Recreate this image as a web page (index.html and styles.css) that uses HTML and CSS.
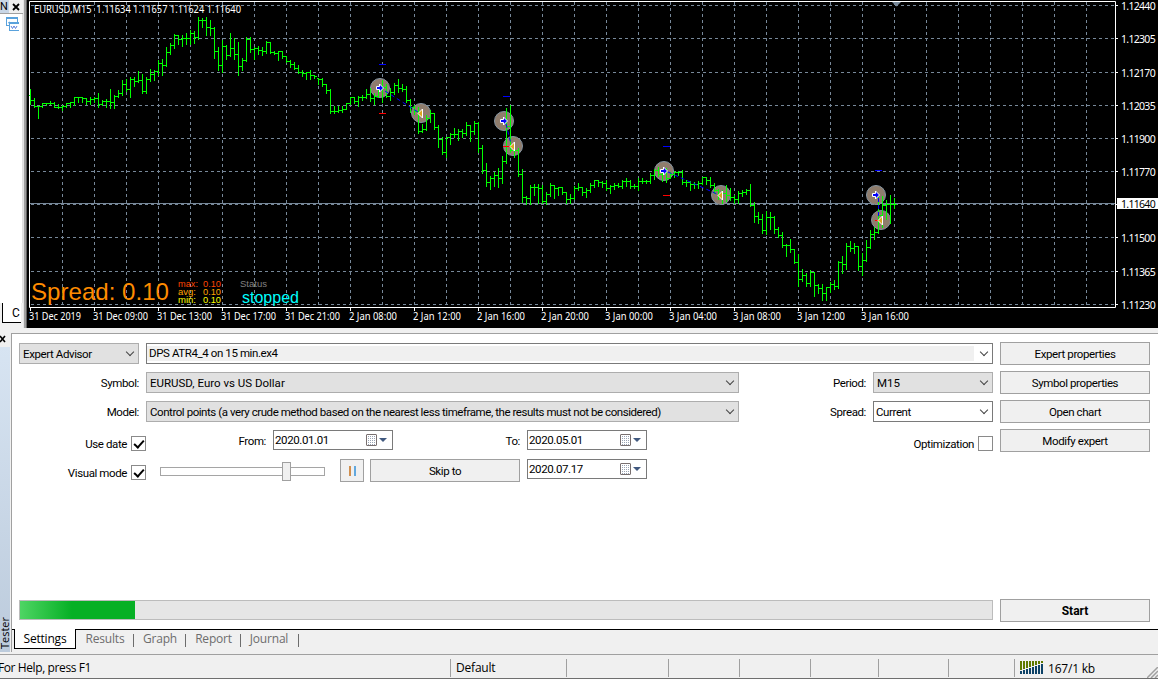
FILE: index.html
```html
<!DOCTYPE html>
<html lang="en">
<head>
  <meta charset="UTF-8" />
  <title>Strategy Tester</title>
  <link rel="stylesheet" href="styles.css">
</head>
<body>
  <div class="workspace">
    <div class="navigator">
      <div class="nav-head"><span class="nav-title">N</span>
        <svg width="8" height="8" viewBox="0 0 8 8"><path d="M1 1l6 6M7 1l-6 6" stroke="#000" stroke-width="1.8"/></svg>
      </div>
      <div class="nav-body">
        <svg class="nav-icon" width="13" height="15" viewBox="0 0 13 15">
          <rect x=".5" y=".5" width="11" height="8" fill="#fff" stroke="#5aa2dc"/>
          <path d="M0 1h12" stroke="#5aa2dc" stroke-width="2"/>
          <path d="M2 6l2-1 1 1" fill="none" stroke="#5aa2dc"/>
          <rect x="3.500" y="5.500" width="10" height="8" fill="#fff" stroke="#5aa2dc"/>
          <path d="M3 6h10" stroke="#5aa2dc" stroke-width="2"/>
          <path d="M5 9l1.500 2.500 1.500-2.500 1.500 2.500 1.500-2.500" fill="none" stroke="#5a80dc"/>
        </svg>
      </div>
      <div class="nav-tab">C</div>
    </div>
    <svg class="chart" id="chart" width="1134" height="328" viewBox="24 0 1134 328"></svg>
  </div>

  <div class="tester">
    <div class="side">
      <svg class="side-close" width="6" height="8" viewBox="0 0 6 8"><path d="M0 1l5 6M5 1l-5 6" stroke="#000" stroke-width="1.600"/></svg>
      <div class="side-bar"><span>Tester</span></div>
    </div>
    <div class="panel">
      <div class="form">
        <div class="fields">
          <div class="row">
            <div class="select small"><span>Expert Advisor</span><i class="arrow"></i></div>
            <div class="select white wide"><span class="inner">DPS ATR4_4 on 15 min.ex4</span><i class="arrow"></i></div>
          </div>
          <div class="row">
            <label>Symbol:</label>
            <div class="select long"><span class="symbol">EURUSD, Euro vs US Dollar</span><i class="arrow"></i></div>
            <label>Period:</label>
            <div class="select small"><span class="symbol">M15</span><i class="arrow"></i></div>
          </div>
          <div class="row">
            <label>Model:</label>
            <div class="select long"><span class="model">Control points (a very crude method based on the nearest less timeframe, the results must not be considered)</span><i class="arrow"></i></div>
            <label>Spread:</label>
            <div class="select white small spread-select"><span>Current</span><i class="arrow"></i></div>
          </div>
          <div class="row dates">
            <div class="option"><span>Use date</span><b class="check on"></b></div>
            <label class="from">From:</label>
            <div class="date"><span>2020.01.01</span><i class="cal"></i><i class="drop"></i></div>
            <label>To:</label>
            <div class="date"><span>2020.05.01</span><i class="cal"></i><i class="drop"></i></div>
            <div class="option last"><span>Optimization</span><b class="check"></b></div>
          </div>
          <div class="row dates">
            <div class="option"><span>Visual mode</span><b class="check on"></b></div>
            <div class="slider"><div class="thumb"></div></div>
            <button class="pause"><i></i><i></i></button>
            <button class="skip">Skip to</button>
            <div class="date"><span>2020.07.17</span><i class="cal"></i><i class="drop"></i></div>
          </div>
        </div>
        <div class="actions">
          <button>Expert properties</button>
          <button>Symbol properties</button>
          <button>Open chart</button>
          <button>Modify expert</button>
        </div>
      </div>
      <div class="run">
        <div class="progress"><div class="bar"></div></div>
        <button class="start">Start</button>
      </div>
      <div class="tabs">
        <div class="tab active">Settings</div>
        <div class="tab results">Results</div>
        <div class="tab graph">Graph</div>
        <div class="tab report">Report</div>
        <div class="tab journal">Journal</div>
      </div>
    </div>
  </div>

  <div class="status">
    <div class="cell help">For Help, press F1</div>
    <div class="cell profile">Default</div>
    <div class="cell c1"></div>
    <div class="cell c2"></div>
    <div class="cell c3"></div>
    <div class="cell c4"></div>
    <div class="cell c5"></div>
    <div class="cell c6"></div>
    <div class="cell traffic">
      <svg id="signal" width="24" height="14" viewBox="0 0 24 14"></svg>
      <span>167/1 kb</span>
    </div>
    <svg class="grip" width="11" height="11" viewBox="0 0 11 11"><path d="M0 11L11 0M4 11l7-7M8 11l3-3" stroke="#a0a0a0" stroke-width="1.500"/></svg>
  </div>

  <script>
    // each bar: high, low, close (in chart pixels); open is the previous close
    const bars = `89,104,100 98,107,106 106,118,106 103,107,103 103,105,103 101,104,103 102,107,107 104,108,107
      105,110,106 103,107,103 102,107,102 97,105,97 97,102,97 97,102,98 98,104,101 97,104,99
      97,102,98 93,107,104 100,105,101 99,107,101 89,108,102 95,108,96 90,97,93 80,95,84
      79,91,89 77,97,79 77,86,81 71,82,80 74,93,91 77,93,79 69,81,74 70,80,71
      60,75,63 59,75,65 47,66,52 43,54,45 34,48,35 35,44,39 35,46,38 33,44,38
      30,44,33 31,43,37 17,39,20 18,27,20 17,35,27 20,35,28 27,58,51 47,70,65
      40,72,46 45,59,55 33,56,48 38,59,54 42,75,66 58,70,60 37,61,39 37,52,49
      47,59,48 46,54,50 47,55,51 41,53,42 42,53,52 51,54,53 51,60,51 51,58,56
      56,62,61 60,67,64 62,69,68 65,73,72 70,76,73 72,79,72 70,79,75 75,78,76
      78,84,79 78,86,84 84,93,90 89,113,111 106,113,111 106,112,110 106,112,109 103,109,103
      97,104,97 97,103,101 96,106,97 95,100,97 89,98,94 88,101,98 93,104,96 86,97,89
      80,102,87 84,97,96 88,100,92 83,94,85 79,92,88 84,91,89 86,102,100 99,112,107
      105,114,111 107,133,131 124,132,129 115,130,118 110,122,113 113,129,127 125,147,139 137,154,152
      137,157,137 133,144,134 128,137,134 129,140,131 129,137,133 122,135,125 125,141,131 121,134,123
      122,152,148 145,173,170 163,186,182 176,189,178 172,186,175 168,187,178 156,183,161 108,163,126
      105,152,150 148,157,150 148,176,174 169,202,197 196,204,198 185,204,187 184,195,187 184,203,188
      185,203,201 192,204,194 183,196,185 185,198,188 187,195,187 187,194,192 192,203,199 194,203,198
      186,199,188 183,190,187 187,195,192 188,197,190 183,192,185 180,187,180 180,186,182 181,187,183
      180,190,188 185,193,186 183,189,185 183,187,186 180,188,181 178,186,181 180,188,186 184,188,186
      178,190,181 178,183,181 180,183,181 173,183,175 169,179,170 167,176,174 170,181,172 168,182,178
      172,178,174 171,177,172 171,175,172 170,184,182 180,186,182 181,190,184 182,188,184 181,188,183
      177,184,177 177,184,180 177,187,185 183,193,190 189,199,196 190,203,193 185,201,195 188,200,197
      195,203,199 191,203,193 190,196,192 189,194,190 184,206,205 202,222,216 212,223,219 214,233,230
      211,234,217 212,229,217 216,233,229 227,237,235 232,247,245 244,256,245 239,252,249 249,263,262
      254,286,279 269,281,275 273,286,283 270,286,272 272,296,285 284,293,288 284,300,293 287,300,287
      282,292,284 280,289,286 261,288,262 256,273,264 243,269,246 241,251,248 243,253,246 246,270,266
      253,275,260 240,261,247 230,248,234 227,239,232 197,233,215 196,227,205 200,219,204 195,223,204
      198,208,204`.trim().split(/\s+/).map(b => b.split(",").map(Number));

    const prices = ["1.12440", "1.12305", "1.12170", "1.12035", "1.11900", "1.11770", "", "1.11500", "1.11365", "1.11230"];
    const priceY = [5, 38, 72, 105, 138, 171, 204, 237, 271, 304];
    const times = [["31 Dec 2019", 52], ["31 Dec 09:00", 55], ["31 Dec 13:00", 55], ["31 Dec 17:00", 55], ["31 Dec 21:00", 55],
      ["2 Jan 08:00", 48], ["2 Jan 12:00", 48], ["2 Jan 16:00", 48], ["2 Jan 20:00", 48], ["3 Jan 00:00", 48],
      ["3 Jan 04:00", 48], ["3 Jan 08:00", 48], ["3 Jan 12:00", 48], ["3 Jan 16:00", 48]];

    const text = (x, y, s, w, cls) =>
      `<text x="${x}" y="${y}" class="${cls}" textLength="${w}" lengthAdjust="spacingAndGlyphs">${s}</text>`;

    let svg = `<rect x="27" y="0" width="1131" height="328" fill="#000"/>`;

    // grid
    let grid = "";
    priceY.forEach(y => grid += `M31 ${y + .5}H1115`);
    for (let x = 62; x < 1115; x += 32) grid += `M${x + .5} 2V305`;
    svg += `<path class="grid" d="${grid}"/>`;
    svg += `<path class="price-line" d="M30 203.5H1115"/>`;
    svg += `<path class="frame" d="M29.5 307.5V1.5H1115.5V307.5Z"/>`;
    svg += `<path d="M892 2h9l-4.500 4.500z" fill="#778899"/>`;

    // axes
    priceY.forEach((y, i) => {
      svg += `<path class="frame" d="M1116 ${y + .5}h2"/>`;
      if (prices[i]) svg += `<text x="1121" y="${y + 5}" class="axis price">${prices[i]}</text>`;
    });
    svg += `<rect x="1117" y="198" width="41" height="11" fill="#fff"/><text x="1121" y="208" class="axis price dark">1.11640</text>`;
    times.forEach(([t, w], i) => {
      svg += `<path class="frame" d="M${30.5 + i * 64} 308v3"/>` + text(29 + i * 64, 320, t, w, "axis");
    });

    // trade markers
    const opens = [[380, 88], [504, 121], [664, 171], [876, 195]];
    const closes = [[421, 113], [513, 146], [721, 195], [881, 220]];
    opens.concat(closes).forEach(([x, y]) => svg += `<circle class="spot" cx="${x}" cy="${y}" r="9.500"/>`);

    let path = "", last = 95;
    bars.forEach(([h, l, c], i) => {
      const x = 30 + i * 4;
      const o = Math.min(Math.max(last, h), l);
      path += `M${x + .5} ${h}V${l + 1}M${x - 1} ${o + .5}h1M${x + 1} ${c + .5}h2`;
      last = c;
    });
    svg += `<path class="bars" d="${path}"/>`;

    svg += `<path class="take" d="M379 64.500h7M503 96.500h7M663 146.500h7M875 170.500h7"/>`;
    svg += `<path class="stop" d="M379 113.500h7M503 146.500h8M663 195.500h7M875 220.500h4"/>`;
    svg += `<path class="deal" d="M385 91L418 112M506 124L511 144M668 172L717 194M878.500 198V217"/>`;
    opens.forEach(([x, y]) => svg += `<path class="buy" d="M${x - 3.5} ${y - 1.5}h3v-2.500l4 4l-4 4v-2.500h-3z"/>`);
    closes.forEach(([x, y]) => svg += `<path class="exit" d="M${x + 1.5} ${y - 4}v9l-4.500-4.500z"/>`);

    svg += text(34, 13, "EURUSD,M15&#160; 1.11634 1.11657 1.11624 1.11640", 207, "axis");
    svg += text(31, 300, "Spread: 0.10", 138, "spread");
    svg += text(178, 287, "max:", 20, "mini red") + text(203, 287, "0.10", 18, "mini red");
    svg += text(178, 295, "avg:", 18, "mini orange") + text(203, 295, "0.10", 18, "mini orange");
    svg += text(178, 303, "min:", 18, "mini yellow") + text(203, 303, "0.10", 18, "mini yellow");
    svg += text(240, 287, "Status", 27, "mini grey") + text(242, 303, "stopped", 57, "state");
    document.getElementById("chart").innerHTML = svg;

    // connection meter
    let meter = "";
    for (let i = 0; i < 8; i++) {
      meter += `<rect x="${i * 3}" y="0" width="2" height="${9 - i}" fill="#5f7a00"/>`;
      meter += `<rect x="${i * 3}" y="${10 - i}" width="2" height="${3 + i}" fill="#0d4267"/>`;
    }
    document.getElementById("signal").innerHTML = meter;
  </script>
</body>
</html>
```
FILE: styles.css
```css
* { box-sizing: border-box; }
body {
  margin: 0;
  width: 1158px;
  height: 679px;
  overflow: hidden;
  background: #f0f0f0;
  font-family: Roboto, "Liberation Sans", sans-serif;
  font-size: 11.5px;
  color: #000;
}

/* navigator strip and chart */
.workspace {
  display: flex;
  height: 328px;
}
.navigator {
  width: 24px;
  border-right: 1px solid #e3e3e3;
}
.nav-head {
  display: flex;
  align-items: center;
  justify-content: space-between;
  height: 14px;
  padding-right: 3px;
  border-bottom: 1px solid #a0a0a0;
}
.nav-title {
  width: 9px;
  background: #c8d6e6;
  font-size: 11px;
  line-height: 13px;
}
.nav-body {
  height: 289px;
  padding: 3px 0 0 6px;
  background: #fff;
  border-right: 1px solid #e0e0e0;
}
.nav-icon { display: block; }
.nav-tab {
  height: 20px;
  margin: 0 2px 0 2px;
  padding-left: 9px;
  background: #fff;
  border-left: 1px solid #000;
  border-bottom: 1px solid #000;
  font-size: 12px;
  line-height: 20px;
}
.chart {
  display: block;
  background: linear-gradient(90deg, #a0a0a0 2px, #606060 2px);
}
.grid {
  fill: none;
  stroke: #778899;
  stroke-dasharray: 3 3;
}
.price-line { stroke: #778899; }
.frame { fill: none; stroke: #fff; }
.bars { fill: none; stroke: #00ff00; }
.spot { fill: #8f7d6d; stroke: #8595a3; }
.take { stroke: #0000ff; }
.stop { stroke: #ff0000; }
.deal { stroke: #0000ff; stroke-dasharray: 4 3; }
.buy { fill: #0000ff; stroke: #fff; }
.exit { fill: #daa520; stroke: #fff; }
.axis {
  font-family: "Noto Sans", sans-serif;
  font-size: 10.5px;
  fill: #fff;
}
.price { letter-spacing: -0.7px; }
.dark { fill: #000; }
.spread, .mini, .state { font-family: "Liberation Sans", sans-serif; }
.spread { font-size: 24px; fill: #ff8c00; }
.mini { font-size: 9px; }
.state { font-size: 16px; fill: #00ffff; }
.red { fill: #ff4500; }
.orange { fill: #ffa500; }
.yellow { fill: #ffff00; }
.grey { fill: #808080; }

/* tester */
.tester {
  display: flex;
  height: 326px;
  padding-top: 5px;
}
.side {
  width: 11px;
  height: 319px;
}
.side-close {
  display: block;
  margin-top: 2px;
}
.side-bar {
  display: flex;
  align-items: flex-end;
  width: 10px;
  height: 305px;
  margin-top: 4px;
  background: linear-gradient(#d7e4f2, #bccbdc);
}
.side-bar span {
  writing-mode: vertical-rl;
  transform: rotate(180deg);
  width: 10px;
  padding-top: 3px;
  font-family: "Open Sans", sans-serif;
  font-size: 11px;
  line-height: 10px;
}
.panel {
  display: flex;
  flex-direction: column;
  flex: 1;
  height: 319px;
  border-left: 1px solid #a0a0a0;
  border-top: 1px solid #a0a0a0;
  background: #fff;
}
.form {
  display: flex;
  gap: 7px;
  height: 265px;
  padding: 5px 0 0 7px;
  letter-spacing: -0.4px;
}
.fields { width: 974px; }
.row {
  display: flex;
  align-items: center;
  gap: 7px;
  height: 29px;
}
.row label {
  width: 120px;
  text-align: right;
}
.select {
  display: flex;
  align-items: center;
  height: 21px;
  padding-left: 3px;
  border: 1px solid #adadad;
  background: #e1e1e1;
  white-space: nowrap;
}
.select span { flex: 1; }
.select .model { letter-spacing: -0.44px; }
.select .symbol { letter-spacing: 0; }
.select.white { border-color: #7a7a7a; background: #fff; }
.small { width: 120px; }
.long { width: 593px; }
.wide { flex: 1; padding-left: 0; }
.select.spread-select { padding-left: 2px; }
.select .inner {
  height: 15px;
  padding-left: 2px;
  margin-right: 5px;
  background: #f0f0f0;
  line-height: 14px;
}
.arrow {
  width: 6px;
  height: 6px;
  margin: -4px 5px 0 2px;
  border: solid #444;
  border-width: 0 1px 1px 0;
  transform: rotate(45deg);
}
.dates { align-items: flex-start; }
.dates label {
  height: 29px;
  line-height: 31px;
}
.dates .from { margin-left: -7px; }
.option {
  display: flex;
  align-items: center;
  justify-content: flex-end;
  gap: 4px;
  width: 127px;
  padding-top: 9px;
}
.option span { padding-top: 2px; }
.option.last { margin-left: auto; }
.check {
  width: 15px;
  height: 15px;
  border: 1px solid #8a8a8a;
  background: #fff;
}
.check.on::after {
  content: "";
  display: block;
  width: 8px;
  height: 4px;
  margin: 3px 0 0 2px;
  border: solid #000;
  border-width: 0 0 2px 2px;
  transform: rotate(-48deg);
}
.date {
  display: flex;
  align-items: center;
  width: 120px;
  height: 20px;
  margin-top: 4px;
  padding: 0 5px 0 1px;
  border: 1px solid #7a7a7a;
}
.date span { flex: 1; }
.cal {
  width: 11px;
  height: 12px;
  border: 1px solid #786f6f;
  border-radius: 1px;
  background: repeating-linear-gradient(90deg, #fff 0 1px, transparent 1px 2px), repeating-linear-gradient(#fff 0 1px, #9aa4b4 1px 2px);
}
.drop {
  margin-left: 2px;
  border: 4px solid transparent;
  border-top-color: #41597f;
  border-bottom: 0;
}
.slider {
  width: 165px;
  height: 9px;
  margin: 12px 8px 0 7px;
  border: 1px solid #a5a5a5;
}
.thumb {
  width: 9px;
  height: 19px;
  margin: -6px 0 0 121px;
  border: 1px solid #a0a0a0;
  background: #f0f0f0;
}
button {
  width: 150px;
  height: 23px;
  padding: 0;
  border: 1px solid #a0a0a0;
  background: #f0f0f0;
  color: #000;
  font: inherit;
  letter-spacing: inherit;
}
.pause {
  display: flex;
  align-items: center;
  justify-content: center;
  gap: 3px;
  width: 24px;
}
.dates button { margin-top: 4px; }
.pause i {
  width: 2px;
  height: 10px;
  background: #d08f4e;
}
.pause i + i { background: #62a8dd; }
.skip { margin-left: -1px; }
.actions {
  display: flex;
  flex-direction: column;
  gap: 6px;
  padding-top: 3px;
}
.run {
  display: flex;
  gap: 7px;
  height: 30px;
  padding-left: 7px;
}
.progress {
  width: 974px;
  height: 20px;
  margin-top: 1px;
  border: 1px solid #bcbcbc;
  background: #e6e6e6;
}
.bar {
  width: 115px;
  height: 18px;
  background: linear-gradient(90deg, #4fd564, #06b025 45%);
}
.start {
  font-size: 12px;
  font-weight: bold;
}
.tabs {
  display: flex;
  height: 23px;
  padding-left: 2px;
  border-top: 1px solid #000;
  background: #f0f0f0;
  font-family: "Open Sans", sans-serif;
  font-size: 12px;
  letter-spacing: -0.2px;
  color: #6d6d6d;
}
.tab {
  position: relative;
  height: 19px;
  line-height: 18px;
  text-align: center;
}
.tab:not(.active)::after {
  content: "";
  position: absolute;
  top: 4px;
  right: 0;
  width: 1px;
  height: 13px;
  background: #6d6d6d;
}
.active {
  width: 62px;
  height: 20px;
  margin-top: -1px;
  border: 1px solid #000;
  border-top: 0;
  background: #fff;
  color: #000;
  line-height: 20px;
}
.results { width: 58px; }
.graph { width: 52px; }
.report { width: 55px; }
.journal { width: 58px; padding-right: 2px; }

/* status bar */
.status {
  display: flex;
  align-items: flex-start;
  height: 25px;
  border-top: 1px solid #a0a0a0;
  border-bottom: 1px solid #6e6e6e;
  font-family: "Open Sans", sans-serif;
  font-size: 12px;
  letter-spacing: -0.2px;
}
.cell {
  height: 18px;
  margin-top: 4px;
  border-right: 1px solid #a0a0a0;
  line-height: 17px;
}
.help {
  width: 451px;
  text-indent: -2px;
  letter-spacing: -0.4px;
}
.profile { width: 116px; padding-left: 5px; }
.c1 { width: 102px; }
.c2 { width: 71px; }
.c3 { width: 71px; }
.c4 { width: 68px; }
.c5 { width: 70px; }
.c6 { width: 66px; }
.traffic {
  display: flex;
  align-items: center;
  gap: 4px;
  width: 98px;
  padding-left: 5px;
  border-right: 0;
}
.grip {
  align-self: flex-end;
  margin-left: auto;
}
```
